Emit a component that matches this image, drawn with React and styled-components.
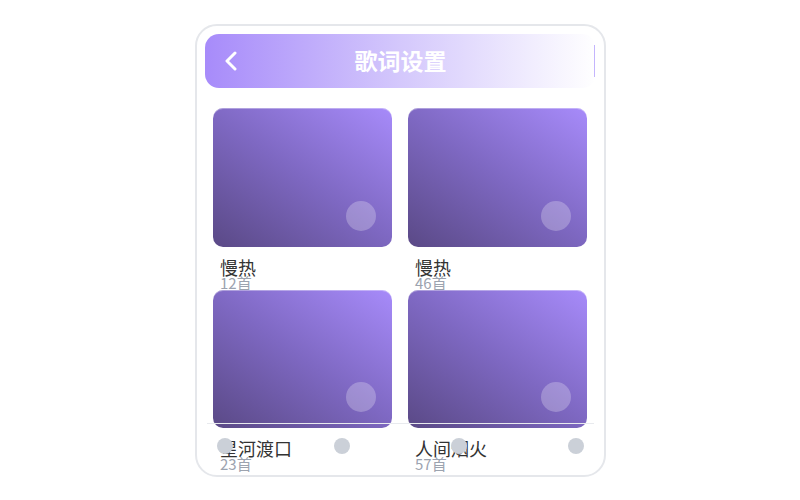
import React from 'react';
import styled, { createGlobalStyle } from 'styled-components';

const Global = createGlobalStyle`
  body {
    margin: 0;
    background: #ffffff;
    font-family: "Noto Sans CJK SC", "Noto Sans", sans-serif;
  }
`;

const Page = styled.div`
  width: 800px;
  height: 500px;
  padding-top: 24px;
  box-sizing: border-box;
`;

const Phone = styled.div`
  position: relative;
  margin-left: 195px;
  width: 411px;
  height: 453px;
  box-sizing: border-box;
  border: 2px solid #e5e7eb;
  border-radius: 22px;
  padding: 8px 8px 0;
  overflow: hidden;
  background: #fff;
`;

const Header = styled.div`
  position: relative;
  height: 54px;
  border-radius: 14px;
  background: linear-gradient(90deg, #a78bfa 0%, #d4c8fc 50%, #ffffff 100%);
  display: flex;
  align-items: center;
  justify-content: center;
  padding-bottom: 3px;
  box-sizing: border-box;

  &::after {
    content: '';
    position: absolute;
    right: 1px;
    top: 11px;
    bottom: 11px;
    width: 1px;
    background: #c4b5fd;
  }
`;

const Back = styled.button`
  position: absolute;
  left: 16px;
  top: 15px;
  width: 20px;
  height: 24px;
  padding: 0;
  border: none;
  background: none;
  display: flex;
  align-items: center;
  justify-content: center;
`;

const Title = styled.h1`
  margin: 0;
  font-size: 23px;
  font-weight: 700;
  color: #ffffff;
`;

const Grid = styled.div`
  display: grid;
  grid-template-columns: 179px 179px;
  grid-auto-rows: 166px;
  column-gap: 16px;
  row-gap: 16px;
  margin-top: 20px;
  padding-left: 8px;
`;

const Item = styled.div`
  display: flex;
  flex-direction: column;
`;

const Cover = styled.div`
  position: relative;
  height: ${(p) => p.h}px;
  flex-shrink: 0;
  border-radius: 10px;
  background: linear-gradient(215deg, #a78bfa 0%, #7e68c2 50%, #5a4986 100%);
  box-shadow: inset 0 1px 0 rgba(255, 255, 255, 0.35);
`;

const Play = styled.span`
  position: absolute;
  right: 16px;
  bottom: 16px;
  width: 30px;
  height: 30px;
  border-radius: 50%;
  background: rgba(255, 255, 255, 0.25);
`;

const Name = styled.div`
  margin-top: 11px;
  padding-left: 7px;
  font-size: 18px;
  line-height: 18px;
  font-weight: 400;
  color: #333333;
`;

const Count = styled.div`
  padding-left: 7px;
  font-size: 15px;
  line-height: 14px;
  color: #9ca3af;
`;

const Nav = styled.div`
  position: absolute;
  left: 10px;
  right: 10px;
  bottom: 7px;
  height: 44px;
  border-top: 1px solid #e8eaee;
  padding: 0 10px;
  display: flex;
  align-items: center;
  justify-content: space-between;
`;

const Dot = styled.span`
  width: 16px;
  height: 16px;
  border-radius: 50%;
  background: #cbd0d8;
`;

const lists = [
  { name: '慢热', count: 12, h: 139 },
  { name: '慢热', count: 46, h: 139 },
  { name: '星河渡口', count: 23, h: 138 },
  { name: '人间烟火', count: 57, h: 138 },
];

export default function App() {
  return (
    <Page>
      <Global />
      <Phone>
        <Header>
          <Back aria-label="返回">
            <svg width="14" height="20" viewBox="0 0 14 20">
              <path d="M11 2 L3 10 L11 18" fill="none" stroke="#fff" strokeWidth="3" strokeLinecap="round" strokeLinejoin="round" />
            </svg>
          </Back>
          <Title>歌词设置</Title>
        </Header>
        <Grid>
          {lists.map((l, i) => (
            <Item key={i}>
              <Cover h={l.h}>
                <Play />
              </Cover>
              <Name>{l.name}</Name>
              <Count>{l.count}首</Count>
            </Item>
          ))}
        </Grid>
        <Nav>
          <Dot />
          <Dot />
          <Dot />
          <Dot />
        </Nav>
      </Phone>
    </Page>
  );
}
